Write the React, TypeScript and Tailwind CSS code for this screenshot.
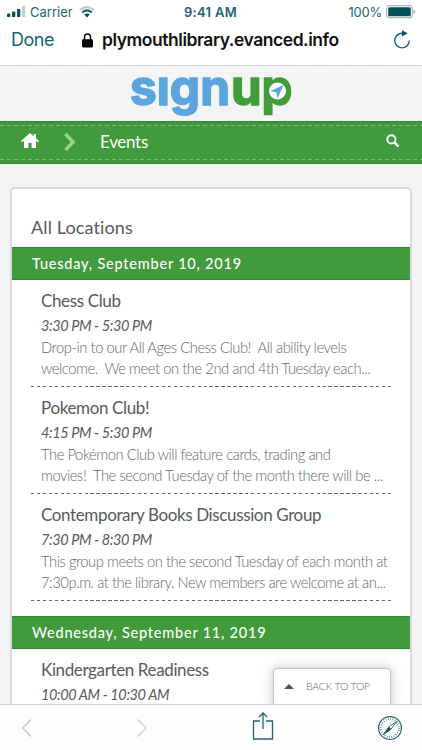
import React from "react";

const linen = "bg-[#f4f4f4] bg-[repeating-linear-gradient(0deg,rgba(0,0,0,0.005)_0_2px,transparent_2px_7px),repeating-linear-gradient(90deg,rgba(0,0,0,0.005)_0_3px,transparent_3px_11px)]";

function StatusBar() {
  return (
    <div className="flex h-6 items-center pl-[7px] pr-[6px] text-[13px] leading-6 text-[#24636e] font-['Inter',sans-serif]">
      <div className="flex w-[170px] items-center">
        <svg width="19" height="12" viewBox="0 0 19 12" fill="#074f5c">
          <rect x="0" y="7.5" width="3.3" height="3.5" rx=".8" />
          <rect x="5" y="5.5" width="3.3" height="5.5" rx=".8" />
          <rect x="10" y="3" width="3.3" height="8" rx=".8" />
          <rect x="15" y="0" width="3.3" height="11" rx=".8" fill="#c8cdd0" />
        </svg>
        <span className="ml-[4px] w-[43px] whitespace-nowrap text-[13px] tracking-[0px]">Carrier</span>
        <svg className="ml-[6px]" width="16" height="12" viewBox="0 0 16 12" fill="none">
          <path d="M1 4Q8-2 15 4" stroke="#c0c9cc" strokeWidth="2" />
          <path d="M3.2 6.5Q8 2.3 12.8 6.5" stroke="#176470" strokeWidth="2" />
          <path d="M5.2 8.6Q8 6.3 10.8 8.6L8 11.5Z" fill="#074f5c" />
        </svg>
      </div>
      <span className="ml-[7px] whitespace-nowrap text-[13px] font-semibold tracking-[0.3px]">9:41 AM</span>
      <span className="ml-auto whitespace-nowrap text-[13px] tracking-[-0.25px]">100%</span>
      <svg className="ml-[4px]" width="30" height="14" viewBox="0 0 30 14">
        <rect x=".7" y=".7" width="25.6" height="12" rx="3" fill="white" stroke="#a9b6ba" strokeWidth="1.2" />
        <rect x="2.2" y="2.2" width="22.6" height="9" rx="1.5" fill="#074f5c" />
        <path d="M27.5 4.5v4.5q1.8-.6 1.8-2.25T27.5 4.5" fill="#a9b6ba" />
      </svg>
    </div>
  );
}

function AddressBar() {
  return (
    <div className="flex h-[41px] items-center pb-[9px] pl-[11px] pr-[11px] font-['Inter',sans-serif]">
      <span className="w-[71px] text-[18px] leading-8 tracking-[-0.5px] text-[#176470]">Done</span>
      <svg width="11" height="15" viewBox="0 0 11 15">
        <path d="M2.5 7V4a3 3 0 0 1 6 0v3" fill="none" stroke="black" strokeWidth="1.4" />
        <rect x="0" y="6.2" width="11" height="8.2" rx="1.3" />
      </svg>
      <span className="ml-[9px] whitespace-nowrap text-[17.5px] font-semibold leading-8 tracking-[-0.46px] text-[#111]">plymouthlibrary.evanced.info</span>
      <svg className="ml-auto" width="18" height="20" viewBox="0 0 18 20">
        <path d="M9.5 3.3A7.3 7.3 0 1 0 16.3 10.6" fill="none" stroke="#176470" strokeWidth="1.4" />
        <path d="M9 .3l5.5 3L9 6.4z" fill="#074f5c" />
      </svg>
    </div>
  );
}

function Logo() {
  return (
    <svg width="164" height="50" viewBox="0 0 164 50" className="overflow-visible font-['Inter',sans-serif] font-bold">
      <text x="0" y="35.5" fontSize="49" textLength="100" lengthAdjust="spacingAndGlyphs" fill="#5aa5dc" stroke="#5aa5dc" strokeWidth="1.6">sıgn</text>
      <text x="101" y="35.5" fontSize="49" textLength="61.5" lengthAdjust="spacingAndGlyphs" fill="#429c3a" stroke="#429c3a" strokeWidth="1.6">up</text>
      <circle cx="147.5" cy="22" r="8.5" fill="white" />
      <path d="M153.5 16l-13 6 6 1.5 1 6z" fill="#5aa5dc" />
    </svg>
  );
}

function DateBar({ children }: { children: string }) {
  return (
    <div className="flex h-[33px] items-center border-y border-[#348531] bg-[#419a3b] pl-[20px] text-[14.5px] font-medium tracking-[0.78px] text-white">
      {children}
    </div>
  );
}

type EventProps = { title: string; time: string; lines: string[] };

function EventItem({ title, time, lines }: EventProps) {
  return (
    <div className="ml-[19px] mr-[19px] h-[107px] whitespace-pre pl-[10px] pt-[10px]">
      <div className="text-[17px] leading-[22px] tracking-[-0.37px] text-[#58595c]">{title}</div>
      <div className="mb-[1px] mt-[4px] text-[14.5px] italic leading-[20px] tracking-[-0.4px] text-[#58595c]">{time}</div>
      {lines.map((line) => (
        <div key={line} className="text-[14.75px] font-light leading-[20.5px] tracking-[-0.44px] text-[#68696b]">{line}</div>
      ))}
    </div>
  );
}

function Dashes() {
  return <div className="mx-[19px] -mt-px h-px bg-[repeating-linear-gradient(90deg,#66676a_0_3.3px,transparent_3.3px_5.95px)]" />;
}

const events: EventProps[] = [
  { title: "Chess Club", time: "3:30 PM - 5:30 PM", lines: ["Drop-in to our All Ages Chess Club!  All ability levels", "welcome.  We meet on the 2nd and 4th Tuesday each..."] },
  { title: "Pokemon Club!", time: "4:15 PM - 5:30 PM", lines: ["The Pokémon Club will feature cards, trading and", "movies!  The second Tuesday of the month there will be ..."] },
  { title: "Contemporary Books Discussion Group", time: "7:30 PM - 8:30 PM", lines: ["This group meets on the second Tuesday of each month at", "7:30p.m. at the library. New members are welcome at an..."] },
];

function Toolbar() {
  return (
    <div className="relative z-10 flex h-[46px] shrink-0 items-center justify-between border-t border-[#d5d6d8] bg-[#fdfdfd] pl-[21px] pr-[19px]">
      <svg width="12" height="20" viewBox="0 0 12 20" fill="none" stroke="#c8c9cb" strokeWidth="1.3"><path d="M10 1.5L1.5 10l8.5 8.5" /></svg>
      <svg width="12" height="20" viewBox="0 0 12 20" fill="none" stroke="#c8c9cb" strokeWidth="1.3"><path d="M1.5 1.5L10 10l-8.5 8.5" /></svg>
      <svg className="-mt-[3px]" width="22" height="30" viewBox="0 0 22 30" fill="none" stroke="#24636e" strokeWidth="1.3">
        <path d="M8 10H1.5v18h19V10H14M11 18V2M7 6l4-4 4 4" />
      </svg>
      <svg width="26" height="26" viewBox="0 0 26 26" fill="none" stroke="#24636e">
        <circle cx="13" cy="13" r="11.4" strokeWidth="1.2" />
        <circle cx="13" cy="13" r="9" strokeWidth="1.6" strokeDasharray=".7 1.656" />
        <path d="M19.5 6.5l-7.5 5.3-5.5 7.7 7.5-5.3z" fill="white" strokeWidth=".9" />
        <path d="M6.5 19.5l5.5-7.7 2 2.4z" fill="#074f5c" strokeWidth=".5" />
      </svg>
    </div>
  );
}

export default function App() {
  return (
    <div className="flex h-[750px] w-[422px] flex-col overflow-hidden bg-white font-['Lato',sans-serif]">
      <header className="h-[66px] shrink-0 border-b border-[#d3d4d6]"><StatusBar /><AddressBar /></header>
      <main className={`relative min-h-0 flex-1 ${linen}`}>
        <div className="flex h-[55px] justify-center pl-px pt-[3px]"><Logo /></div>
        <nav className="flex h-[43px] flex-col justify-between border-y border-[#348531] bg-[#419a3b] py-[3px]">
          <div className="h-px bg-[repeating-linear-gradient(90deg,#6fc06b_0_4px,transparent_4px_7px)]" />
          <div className="flex items-center pb-[1px] pl-[21px] pr-[22px] text-white">
            <svg className="-mt-[3px]" width="18" height="16" viewBox="0 0 18 16" fill="white">
              <path d="M9 0L0 8l1 1.2 2-1.5V15h4.4v-5h3.2v5H15V7.7l2 1.5L18 8l-3-2.7V1h-2.5v2.2z" />
            </svg>
            <svg className="ml-[25px]" width="12" height="20" viewBox="0 0 12 20" fill="none" stroke="#91d68d" strokeWidth="3.5">
              <path d="M1.5 2L9 10l-7.5 8" />
            </svg>
            <span className="ml-[24px] text-[17px] leading-6 tracking-[-0.3px]">Events</span>
            <svg className="-mt-[3px] ml-auto" width="14" height="14" viewBox="0 0 14 14" fill="none" stroke="white">
              <circle cx="5.4" cy="5.4" r="4.1" strokeWidth="1.9" /><path d="M8.5 8.5l3.3 3.3" strokeWidth="2.5" strokeLinecap="round" />
            </svg>
          </div>
          <div className="h-px bg-[repeating-linear-gradient(90deg,#6fc06b_0_4px,transparent_4px_7px)]" />
        </nav>
        <section className="ml-[10px] mr-[10px] mt-[23px] h-[560px] rounded-[5px] border-2 border-[#dadbdc] bg-white">
          <div className="h-[58px] pl-[19px] pt-[26px] text-[18px] leading-6 tracking-[0.12px] text-[#58595c]">All Locations</div>
          <DateBar>Tuesday, September 10, 2019</DateBar>
          {events.map((event) => <React.Fragment key={event.title}><EventItem {...event} /><Dashes /></React.Fragment>)}
          <div className="h-[15px]" />
          <DateBar>Wednesday, September 11, 2019</DateBar>
          <EventItem title="Kindergarten Readiness" time="10:00 AM - 10:30 AM" lines={[]} />
        </section>
        <button className="absolute bottom-[-6px] right-[31px] flex h-[42px] w-[118px] items-center rounded-[4px] border border-[#c4c5c7] bg-white pb-[5px] pl-[10px] text-[10.5px] font-light text-[#66676a] shadow-[0_0_12px_rgba(0,0,0,0.25)]">
          <svg width="10" height="5" viewBox="0 0 10 5"><path d="M0 5l5-5 5 5z" fill="#505154" /></svg>
          <span className="ml-[12px] whitespace-nowrap tracking-[-0.2px]">BACK TO TOP</span>
        </button>
      </main>
      <Toolbar />
    </div>
  );
}
